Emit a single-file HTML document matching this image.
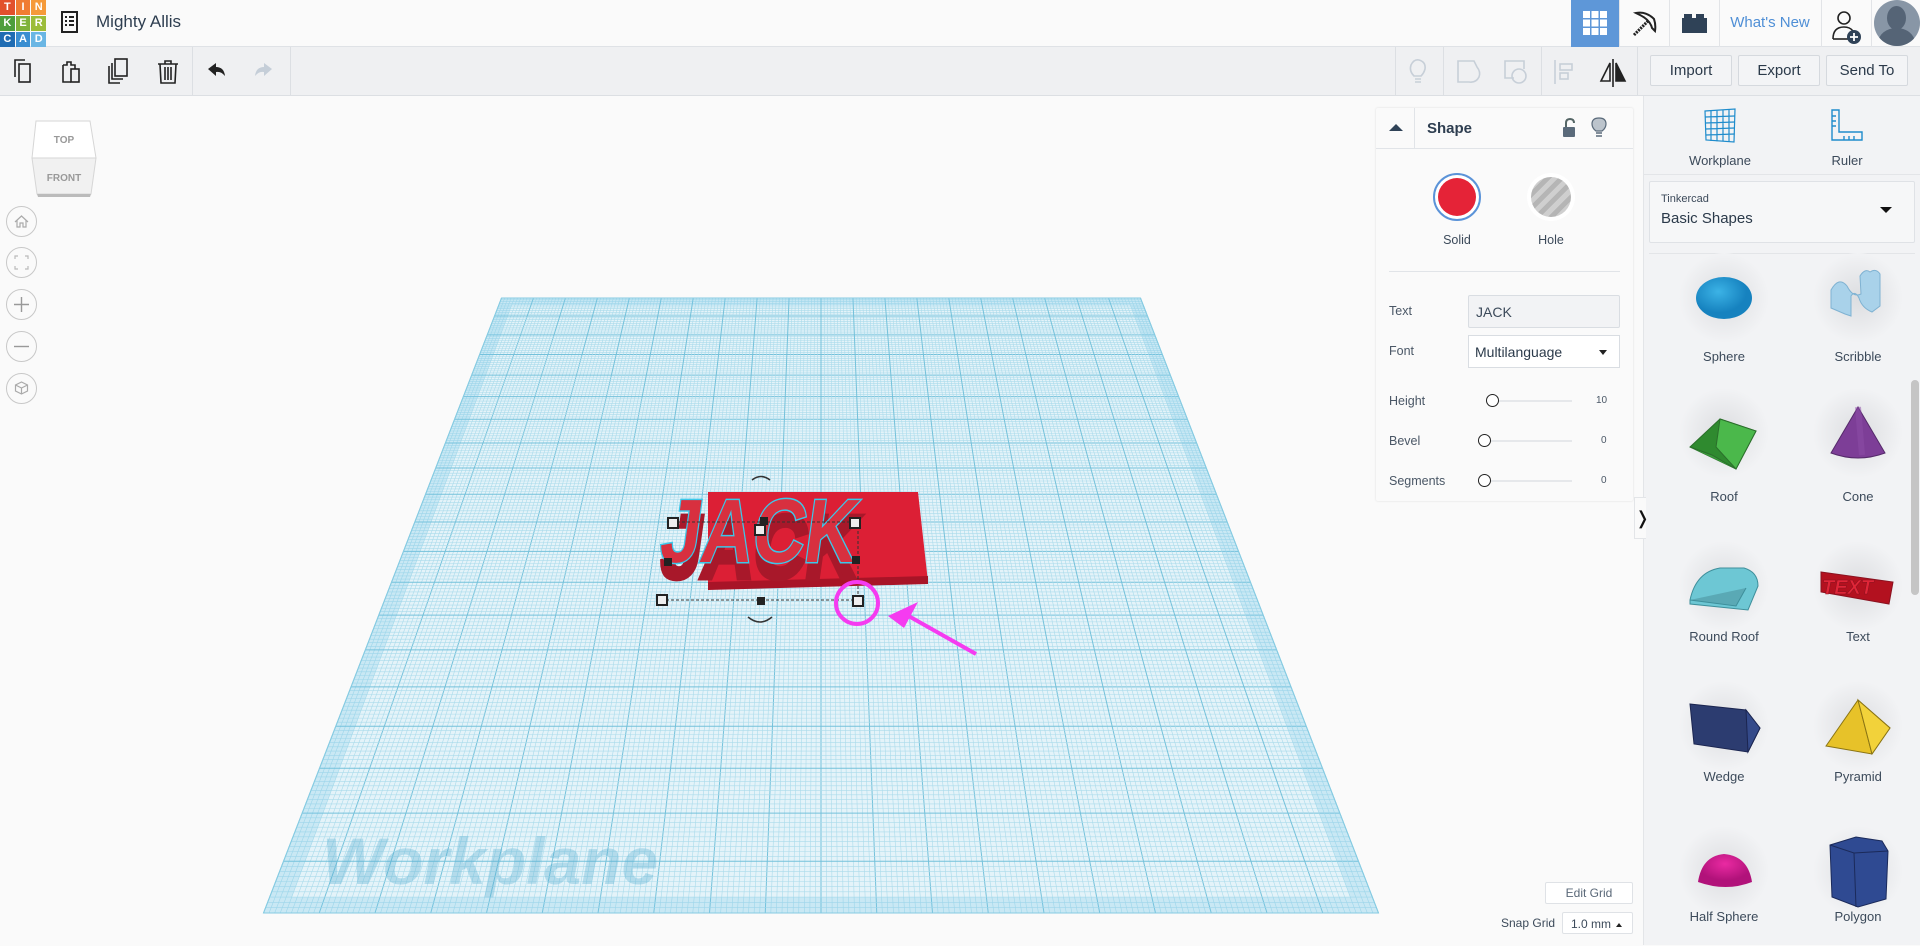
<!DOCTYPE html>
<html><head><meta charset="utf-8">
<style>
*{box-sizing:border-box;margin:0;padding:0}
body{width:1920px;height:945px;overflow:hidden;background:#fafafa;font-family:"Liberation Sans",sans-serif;color:#2b3a4a;position:relative}
.abs{position:absolute}
#hdr{left:0;top:0;width:1920px;height:47px;background:#fafafa;border-bottom:1px solid #dfe2e6}
#tb{left:0;top:47px;width:1920px;height:49px;background:#eff0f2;border-bottom:1px solid #dcdfe3}
.vd{position:absolute;top:0;width:1px;height:48px;background:#dcdfe3}
.hd{position:absolute;top:0;width:1px;height:47px;background:#e2e4e7}
.btn{position:absolute;top:8px;height:31px;border:1px solid #d5d9de;border-radius:2px;background:#f3f4f6;font-size:15px;color:#2b3a4a;text-align:center;line-height:29px}
#rp{left:1643px;top:96px;width:277px;height:849px;background:#f2f3f5;border-left:1px solid #e3e5e8}
.lbl{position:absolute;font-size:13px;color:#3c4a5a;text-align:center;width:120px}
#sp{left:1376px;top:108px;width:257px;height:393px;background:#fafafa;box-shadow:0 0 2px rgba(0,0,0,.12);border-radius:2px}
.pl{position:absolute;left:13px;font-size:12.5px;color:#4a5766}
.nav{position:absolute;left:6px;width:31px;height:31px;border:1px solid #c8c8c8;border-radius:50%;background:#fafafa}
</style></head><body>

<svg class="abs" style="left:0;top:0" width="1920" height="945" id="wp"></svg>

<div class="abs" id="hdr">
 <div class="abs" style="left:0;top:0;width:46px;height:46px;font-size:11px;font-weight:bold;color:#fff;line-height:15px;text-align:center">
  <div style="display:flex"><span style="width:15px;height:15px;background:#e2512c;margin:0 1px 1px 0">T</span><span style="width:15px;height:15px;background:#f07c32;margin:0 1px 1px 0">I</span><span style="width:15px;height:15px;background:#f59a3a">N</span></div>
  <div style="display:flex"><span style="width:15px;height:15px;background:#4e9e3c;margin:0 1px 1px 0">K</span><span style="width:15px;height:15px;background:#7fb23a;margin:0 1px 1px 0">E</span><span style="width:15px;height:15px;background:#9cbd3a">R</span></div>
  <div style="display:flex"><span style="width:15px;height:15px;background:#1f6cb3;margin:0 1px 0 0">C</span><span style="width:15px;height:15px;background:#3a8ed1;margin:0 1px 0 0">A</span><span style="width:15px;height:15px;background:#6ab6e4">D</span></div>
 </div>
 <svg class="abs" style="left:59px;top:11px" width="22" height="22" viewBox="0 0 22 22"><rect x="3" y="1" width="15" height="20" fill="none" stroke="#222" stroke-width="2"/><path d="M6 6h2M10 6h5M6 10h2M10 10h5M6 14h2M10 14h5" stroke="#222" stroke-width="2"/></svg>
 <div class="abs" style="left:96px;top:12px;font-size:17px;color:#2e3e50">Mighty Allis</div>
 <div class="abs" style="left:1571px;top:0;width:48px;height:47px;background:#5e97d8"></div>
 <svg class="abs" style="left:1583px;top:11px" width="24" height="24"><g fill="#fff"><rect x="0" y="0" width="7" height="7"/><rect x="8.5" y="0" width="7" height="7"/><rect x="17" y="0" width="7" height="7"/><rect x="0" y="8.5" width="7" height="7"/><rect x="8.5" y="8.5" width="7" height="7"/><rect x="17" y="8.5" width="7" height="7"/><rect x="0" y="17" width="7" height="7"/><rect x="8.5" y="17" width="7" height="7"/><rect x="17" y="17" width="7" height="7"/></g></svg>
 <div class="hd" style="left:1619px"></div>
 <svg class="abs" style="left:1630px;top:9px" width="28" height="28" viewBox="0 0 28 28"><path d="M4 26L18 12" stroke="#222" stroke-width="3" stroke-dasharray="2 1"/><path d="M6 4Q16 2 24 10Q26 16 25 22L22 19Q20 11 10 6Z" fill="none" stroke="#222" stroke-width="2"/></svg>
 <div class="hd" style="left:1669px"></div>
 <svg class="abs" style="left:1682px;top:14px" width="25" height="20"><rect x="0" y="4" width="25" height="15" fill="#2f4257"/><rect x="2" y="0" width="8" height="5" fill="#2f4257"/><rect x="14" y="0" width="8" height="5" fill="#2f4257"/></svg>
 <div class="hd" style="left:1719px"></div>
 <div class="abs" style="left:1719px;top:14px;width:102px;text-align:center;font-size:15px;color:#4f8fd6">What's New</div>
 <div class="hd" style="left:1821px"></div>
 <svg class="abs" style="left:1832px;top:9px" width="30" height="36" viewBox="0 0 30 36"><circle cx="12" cy="9" r="6" fill="none" stroke="#222" stroke-width="1.6"/><path d="M1 30Q1 18 12 18Q18 18 21 22" fill="none" stroke="#222" stroke-width="1.6"/><path d="M1 30H17" stroke="#222" stroke-width="1.6"/><circle cx="22" cy="28" r="7" fill="#2f4257"/><path d="M22 24v8M18 28h8" stroke="#fff" stroke-width="1.8"/></svg>
 <div class="hd" style="left:1871px"></div>
 <div class="abs" style="left:1874px;top:0;width:46px;height:46px;border-radius:50%;background:#8896a6;overflow:hidden"><div class="abs" style="left:13px;top:6px;width:19px;height:24px;border-radius:50%;background:#556476"></div><div class="abs" style="left:4px;top:28px;width:37px;height:30px;border-radius:50%;background:#556476"></div></div>
</div>

<div class="abs" id="tb">
 <svg class="abs" style="left:11px;top:10px" width="28" height="30" viewBox="0 0 28 30" fill="none" stroke="#222" stroke-width="1.6"><path d="M4 20V3h10"/><rect x="8" y="7" width="11" height="18"/></svg>
 <svg class="abs" style="left:58px;top:10px" width="28" height="30" viewBox="0 0 28 30" fill="none" stroke="#222" stroke-width="1.6"><path d="M5 8v17h8M5 8h4V5h4v3h4v4"/><rect x="13" y="12" width="8" height="13"/></svg>
 <svg class="abs" style="left:105px;top:10px" width="28" height="30" viewBox="0 0 28 30" fill="none" stroke="#222" stroke-width="1.6"><rect x="10" y="2" width="12" height="17"/><path d="M7 6v16h11M4 9v17h11"/></svg>
 <svg class="abs" style="left:154px;top:10px" width="28" height="30" viewBox="0 0 28 30" fill="none" stroke="#222" stroke-width="1.6"><path d="M4 7h20M11 7V4h6v3M6 7l1 19h14l1-19M11 10v13M14 10v13M17 10v13"/></svg>
 <div class="vd" style="left:192px"></div>
 <svg class="abs" style="left:206px;top:14px" width="24" height="20"><path d="M2 8L10 2v4Q18 6 19 15Q15 10 10 11v4Z" fill="#222"/></svg>
 <svg class="abs" style="left:252px;top:14px" width="24" height="20"><path d="M20 8L12 2v4Q4 6 3 15Q7 10 12 11v4Z" fill="#c5ced8"/></svg>
 <div class="vd" style="left:290px"></div>
 <div class="vd" style="left:1395px"></div>
 <svg class="abs" style="left:1408px;top:11px" width="20" height="28" viewBox="0 0 20 28" fill="none" stroke="#c7cfd8" stroke-width="1.6"><path d="M6 18Q1 13 3 7Q6 1 11 2Q18 4 17 11Q16 15 13 18ZM7 21h6M7 24h6"/></svg>
 <div class="vd" style="left:1443px"></div>
 <svg class="abs" style="left:1455px;top:11px" width="28" height="28" fill="none" stroke="#c7cfd8" stroke-width="1.6"><path d="M3 3h16l3 6Q26 14 24 19Q21 25 14 24H3Z"/></svg>
 <svg class="abs" style="left:1502px;top:11px" width="28" height="28" fill="none" stroke="#c7cfd8" stroke-width="1.6"><path d="M12 20H3V3h19v8"/><circle cx="17" cy="18" r="7"/></svg>
 <div class="vd" style="left:1541px"></div>
 <svg class="abs" style="left:1552px;top:11px" width="26" height="28" fill="none" stroke="#c7cfd8" stroke-width="1.6"><path d="M3 2v24"/><rect x="8" y="6" width="12" height="6"/><rect x="8" y="15" width="8" height="6"/></svg>
 <svg class="abs" style="left:1598px;top:10px" width="30" height="30" fill="none" stroke="#222" stroke-width="1.6"><path d="M12 6L3 24h9ZM15 2v28"/><path d="M18 6l9 18H18Z" fill="#222"/></svg>
 <div class="vd" style="left:1637px"></div>
 <div class="btn" style="left:1650px;width:82px">Import</div>
 <div class="btn" style="left:1738px;width:82px">Export</div>
 <div class="btn" style="left:1826px;width:82px">Send To</div>
</div>

<svg class="abs" style="left:28px;top:118px" width="72" height="84">
 <path d="M8 3H62L68 40H4Z" fill="#fff" stroke="#d6d6d6"/>
 <path d="M4 40H68L63 76H9Z" fill="#f1f1f1" stroke="#d6d6d6"/>
 <path d="M9 76H63L62 79H10Z" fill="#bbb"/>
 <text x="36" y="25" text-anchor="middle" font-family="Liberation Sans" font-weight="bold" font-size="10" fill="#999">TOP</text>
 <text x="36" y="63" text-anchor="middle" font-family="Liberation Sans" font-weight="bold" font-size="10" fill="#999">FRONT</text>
</svg>
<div class="nav" style="top:206px"><svg width="29" height="29"><path d="M8 15l6.5-6 6.5 6M10 13v7h3v-4h3v4h3v-7" fill="none" stroke="#aaa" stroke-width="1.2"/></svg></div>
<div class="nav" style="top:247px"><svg width="29" height="29"><path d="M8 11V8h3M18 8h3v3M21 18v3h-3M11 21H8v-3" fill="none" stroke="#bbb" stroke-width="1.2"/></svg></div>
<div class="nav" style="top:289px"><svg width="29" height="29"><path d="M14.5 7v15M7 14.5h15" stroke="#999" stroke-width="1.4"/></svg></div>
<div class="nav" style="top:331px"><svg width="29" height="29"><path d="M7 14.5h15" stroke="#999" stroke-width="1.4"/></svg></div>
<div class="nav" style="top:373px"><svg width="29" height="29"><path d="M14.5 8l6 3v6l-6 3-6-3v-6zM8.5 11l6 3 6-3M14.5 14v6" fill="none" stroke="#aaa" stroke-width="1.2"/></svg></div>

<div class="abs" id="sp">
 <div class="abs" style="left:0;top:0;width:257px;height:41px;border-bottom:1px solid #e1e4e8"></div>
 <div class="abs" style="left:38px;top:0;width:1px;height:41px;background:#e1e4e8"></div>
 <svg class="abs" style="left:12px;top:14px" width="16" height="10"><path d="M1 9L8 2l7 7z" fill="#2f4257"/></svg>
 <div class="abs" style="left:51px;top:12px;font-size:15px;font-weight:bold;color:#2e3e50">Shape</div>
 <svg class="abs" style="left:186px;top:10px" width="16" height="20"><path d="M4 9V5Q4 1 8 1Q12 1 12 5" fill="none" stroke="#566" stroke-width="2"/><rect x="1" y="9" width="12" height="10" rx="1" fill="#5a6a7a"/></svg>
 <svg class="abs" style="left:215px;top:9px" width="16" height="22"><path d="M5 14Q1 11 1 7Q1 1 8 1Q15 1 15 7Q15 11 11 14Z" fill="#bcc4cc" stroke="#5a6a7a" stroke-width="1.2"/><path d="M5 16h6M5 19h6" stroke="#5a6a7a" stroke-width="1.4"/></svg>
 <div class="abs" style="left:57px;top:65px;width:48px;height:48px;border-radius:50%;border:2px solid #5b93d8;background:#fff"><div class="abs" style="left:3px;top:3px;width:38px;height:38px;border-radius:50%;background:#e52337"></div></div>
 <div class="abs" style="left:151px;top:65px;width:48px;height:48px;border-radius:50%;background:#fff"><div class="abs" style="left:4px;top:4px;width:40px;height:40px;border-radius:50%;background:repeating-linear-gradient(135deg,#b5b5b5 0 5px,#cfcfcf 5px 10px)"></div></div>
 <div class="abs" style="left:41px;top:125px;width:80px;text-align:center;font-size:12.5px;color:#3c4a5a">Solid</div>
 <div class="abs" style="left:135px;top:125px;width:80px;text-align:center;font-size:12.5px;color:#3c4a5a">Hole</div>
 <div class="abs" style="left:13px;top:163px;width:231px;height:1px;background:#e1e4e8"></div>
 <div class="pl" style="top:196px">Text</div>
 <div class="abs" style="left:92px;top:187px;width:152px;height:33px;background:#f2f3f5;border:1px solid #d9dde2;border-radius:2px;font-size:14px;padding:8px 7px;color:#3c4a5a">JACK</div>
 <div class="pl" style="top:236px">Font</div>
 <div class="abs" style="left:92px;top:227px;width:152px;height:33px;background:#fff;border:1px solid #d9dde2;font-size:14px;padding:8px 6px;color:#2b3a4a">Multilanguage<span style="position:absolute;right:12px;top:14px;border:4px solid transparent;border-top:5px solid #222"></span></div>
 <div class="pl" style="top:286px">Height</div>
 <div class="pl" style="top:326px">Bevel</div>
 <div class="pl" style="top:366px">Segments</div>
 <div class="abs" style="left:110px;top:292px;width:86px;height:2px;background:#e6e8eb"></div>
 <div class="abs" style="left:102px;top:332px;width:94px;height:2px;background:#e6e8eb"></div>
 <div class="abs" style="left:102px;top:372px;width:94px;height:2px;background:#e6e8eb"></div>
 <div class="abs" style="left:110px;top:286px;width:13px;height:13px;border:1.5px solid #222;border-radius:50%;background:#fff"></div>
 <div class="abs" style="left:102px;top:326px;width:13px;height:13px;border:1.5px solid #222;border-radius:50%;background:#fff"></div>
 <div class="abs" style="left:102px;top:366px;width:13px;height:13px;border:1.5px solid #222;border-radius:50%;background:#fff"></div>
 <div class="abs" style="left:220px;top:287px;font-size:10px;color:#4a5766">10</div>
 <div class="abs" style="left:225px;top:327px;font-size:10px;color:#4a5766">0</div>
 <div class="abs" style="left:225px;top:367px;font-size:10px;color:#4a5766">0</div>
</div>

<div class="abs" style="left:1545px;top:882px;width:88px;height:22px;border:1px solid #dfe2e6;border-radius:2px;background:#fff;font-size:12px;color:#5a6878;text-align:center;line-height:20px">Edit Grid</div>
<div class="abs" style="left:1501px;top:916px;font-size:12px;color:#3c4a5a">Snap Grid</div>
<div class="abs" style="left:1562px;top:912px;width:71px;height:22px;border:1px solid #dfe2e6;border-radius:2px;background:#fff;font-size:12px;color:#3c4a5a;line-height:22px;padding-left:8px">1.0 mm<span style="position:absolute;right:10px;top:7px;border:3px solid transparent;border-bottom:4px solid #222"></span></div>

<div class="abs" id="rp">
 <svg class="abs" style="left:58px;top:12px" width="36" height="36" viewBox="0 0 36 36" fill="none" stroke="#1f8ccc" stroke-width="1.2"><path d="M3 3L33 1L32 34L4 32Z"/><path d="M9 3v30M15 2.6v30.6M21 2.2v31M27 1.8v31.5M3.3 9l29.6-1M3.5 15l29.3-1M3.7 21l29-1M3.9 27l28.8-1"/></svg>
 <div class="lbl" style="left:16px;top:57px">Workplane</div>
 <svg class="abs" style="left:186px;top:12px" width="34" height="36" viewBox="0 0 34 36" fill="none" stroke="#1f8ccc" stroke-width="1.4"><path d="M2 2h7v22h23v8H2Z"/><path d="M2 8h4M2 13h4M2 18h4M14 28v4M19 28v4M24 28v4"/></svg>
 <div class="lbl" style="left:143px;top:57px">Ruler</div>
 <div class="abs" style="left:0;top:78px;width:277px;height:1px;background:#e3e5e8"></div>
 <div class="abs" style="left:5px;top:85px;width:266px;height:62px;background:#f6f7f8;border:1px solid #dfe2e6;border-radius:2px">
  <div class="abs" style="left:11px;top:11px;font-size:11px;color:#3c4a5a">Tinkercad</div>
  <div class="abs" style="left:11px;top:28px;font-size:15px;color:#2b3a4a">Basic Shapes</div>
  <div class="abs" style="left:230px;top:25px;border:6px solid transparent;border-top:6px solid #111"></div>
 </div>
 <div class="abs" style="left:5px;top:157px;width:266px;height:1px;background:#e3e5e8"></div>
 <div class="abs" style="left:267px;top:284px;width:8px;height:215px;border-radius:4px;background:#c5c5c5"></div>
 <svg class="abs" style="left:0;top:150px" width="265" height="700">
  <defs>
   <radialGradient id="sh"><stop offset="0" stop-color="#dcdde0"/><stop offset="1" stop-color="#f2f3f5"/></radialGradient>
   <radialGradient id="sph" cx=".4" cy=".35"><stop offset="0" stop-color="#3cb3e6"/><stop offset="1" stop-color="#1682bf"/></radialGradient>
   <radialGradient id="hs" cx=".5" cy=".3"><stop offset="0" stop-color="#ea2aa2"/><stop offset="1" stop-color="#b1127a"/></radialGradient>
  </defs>
  <g fill="url(#sh)"><circle cx="80" cy="52" r="45"/><circle cx="214" cy="52" r="45"/><circle cx="80" cy="187" r="45"/><circle cx="214" cy="187" r="45"/><circle cx="80" cy="340" r="45"/><circle cx="214" cy="340" r="45"/><circle cx="80" cy="480" r="45"/><circle cx="214" cy="480" r="45"/><circle cx="80" cy="625" r="45"/><circle cx="214" cy="625" r="45"/></g>
  <ellipse cx="80" cy="52" rx="28" ry="21" fill="url(#sph)"/>
  <g transform="translate(214 52)" fill="#a9d2ea" stroke="#7fb2d2" stroke-width="1"><path d="M-27-8q8-14 16-4q6 12 14 8l-1-18q5-8 10-4q6-4 10 2v32l-8 6q-10-4-13-14q-4-8-8-2v20l-6-2l-14-6z"/></g>
  <g transform="translate(80 187)"><path d="M-34 14l30-28 36 12-20 38z" fill="#2f8a2f" stroke="#2b6f2b"/><path d="M-4-14l36 12-20 38-20-22z" fill="#4bb84b" stroke="#2b6f2b"/><path d="M-34 14l22 8 24 14" fill="#3a9b3a" stroke="#2b6f2b"/></g>
  <g transform="translate(214 187)"><path d="M-27 20l27-46 27 46q-27 10-54 0z" fill="#7d3e97" stroke="#552a6a"/><path d="M0-26l4 48" stroke="#8e4ea8" stroke-width="6" opacity=".5"/></g>
  <g transform="translate(80 340)"><path d="M-34 14q6-28 30-32l24 0q14 4 14 18l-10 24-58-6z" fill="#6dc7d4" stroke="#3e8f9b"/><path d="M-34 14l46 6 10-18" fill="#5aa9b5" stroke="#3e8f9b"/></g>
  <g transform="translate(214 340)"><path d="M-37-14l72 10-4 22-68-12z" fill="#b3111f" stroke="#8a1220"/><text x="-36" y="8" font-family="Liberation Sans" font-weight="bold" font-style="italic" font-size="20" fill="#e02638" stroke="#8a1220" stroke-width=".5">TEXT</text></g>
  <g transform="translate(80 480)"><path d="M-34-22l56 6 14 18-12 24-54-8z" fill="#2c3c70" stroke="#1b2550"/><path d="M22-16l14 18-12 24z" fill="#344a8a" stroke="#1b2550"/></g>
  <g transform="translate(214 480)"><path d="M-32 20l32-46 32 28-18 26z" fill="#e7c229" stroke="#8a7414"/><path d="M0-26l14 54" stroke="#8a7414"/><path d="M0-26l32 28-18 26z" fill="#f2d23a" stroke="#8a7414"/></g>
  <path d="M54 636q4-26 26-28q24 2 28 28q-26 10-54 0z" fill="url(#hs)"/>
  <g transform="translate(214 625)"><path d="M-28-26l26-8 26 4 6 10-2 48-28 8-26-10z" fill="#2f4a92" stroke="#1b2a5a"/><path d="M-28-26l24 8 34-2M-4-18l2 54" stroke="#1b2a5a" fill="none"/></g>
 </svg>
 <div class="lbl" style="left:20px;top:253px">Sphere</div><div class="lbl" style="left:154px;top:253px">Scribble</div>
 <div class="lbl" style="left:20px;top:393px">Roof</div><div class="lbl" style="left:154px;top:393px">Cone</div>
 <div class="lbl" style="left:20px;top:533px">Round Roof</div><div class="lbl" style="left:154px;top:533px">Text</div>
 <div class="lbl" style="left:20px;top:673px">Wedge</div><div class="lbl" style="left:154px;top:673px">Pyramid</div>
 <div class="lbl" style="left:20px;top:813px">Half Sphere</div><div class="lbl" style="left:154px;top:813px">Polygon</div>
</div>
<div class="abs" style="left:1634px;top:497px;width:12px;height:42px;background:#fafafa;border:1px solid #e3e5e8;border-right:none;font-size:18px;line-height:40px;text-align:center;color:#111">&#x276D;</div>

<script>
(function(){
var s=document.getElementById('wp'),h='';
var yh=-527.5,yb=913,W=1115,cx=821;
function S(u){return 1/(1+0.745*(1-u));}
function P(u,v){var k=S(u);return [cx+(v-0.5)*W*k, yh+(yb-yh)*k];}
var c=[P(0,0),P(0,1),P(1,1),P(1,0)];
h+='<polygon points="'+c.map(function(p){return p.join(',')}).join(' ')+'" fill="#e4f3f9"/>';
var N=200;
for(var i=0;i<=N;i++){var t=i/N,maj=i%10==0;
 var col=maj?'#74c1da':'#aadbeb',w=maj?1:0.6;
 var a=P(t,0),b=P(t,1);h+='<line x1="'+a[0]+'" y1="'+a[1]+'" x2="'+b[0]+'" y2="'+b[1]+'" stroke="'+col+'" stroke-width="'+w+'"/>';
 a=P(0,t);b=P(1,t);h+='<line x1="'+a[0]+'" y1="'+a[1]+'" x2="'+b[0]+'" y2="'+b[1]+'" stroke="'+col+'" stroke-width="'+w+'"/>';
}
var bi=[P(0.02,0.02),P(0.02,0.98),P(0.985,0.98),P(0.985,0.02)];
h+='<path fill-rule="evenodd" fill="rgba(120,200,230,0.25)" d="M'+c.map(function(p){return p.join(',')}).join('L')+'ZM'+bi.map(function(p){return p.join(',')}).join('L')+'Z"/>';
h+='<polygon points="'+c.map(function(p){return p.join(',')}).join(' ')+'" fill="none" stroke="#86cbe2" stroke-width="1"/>';
h+='<text x="322" y="884" font-family="Liberation Sans" font-weight="bold" font-style="italic" font-size="66" fill="rgba(90,175,210,0.35)">Workplane</text>';
h+='<polygon points="708,492 918,492 928,582 708,588" fill="#dc1f35"/><polygon points="708,582 928,576 928,584 708,590" fill="#a81427"/>';
h+='<g transform="translate(700 0) skewX(-8) scale(0.8 1)"><text x="50" y="578" font-family="Liberation Sans" font-weight="bold" font-size="90" fill="#a8182a" stroke="#a8182a" stroke-width="5">JACK</text>';
h+='<text x="46" y="562" font-family="Liberation Sans" font-weight="bold" font-size="90" fill="#d8303f" stroke="#3cc8ea" stroke-width="3" paint-order="stroke">JACK</text></g>';
h+='<path d="M661 600H858M672 522H858V600" stroke="#333" stroke-width="1" stroke-dasharray="3 2" fill="none"/>';
var hs=[[662,600],[673,523],[855,523],[760,530],[858,601]];
hs.forEach(function(p){h+='<rect x="'+(p[0]-5)+'" y="'+(p[1]-5)+'" width="10" height="10" fill="#eee" stroke="#222" stroke-width="2"/>';});
[[761,601],[668,562],[856,560],[764,521]].forEach(function(p){h+='<rect x="'+(p[0]-4)+'" y="'+(p[1]-4)+'" width="8" height="8" fill="#222"/>';});
h+='<path d="M752 480q9-7 18 0M748 617q12 10 24 0" fill="none" stroke="#333" stroke-width="1.5"/>';
h+='<circle cx="857" cy="603" r="21" fill="none" stroke="#f53bf0" stroke-width="4"/>';
h+='<path d="M976 654L905 614" stroke="#f53bf0" stroke-width="4"/><polygon points="888,616 918,602 904,628" fill="#f53bf0"/>';
s.innerHTML=h;
})();
</script>
</body></html>
